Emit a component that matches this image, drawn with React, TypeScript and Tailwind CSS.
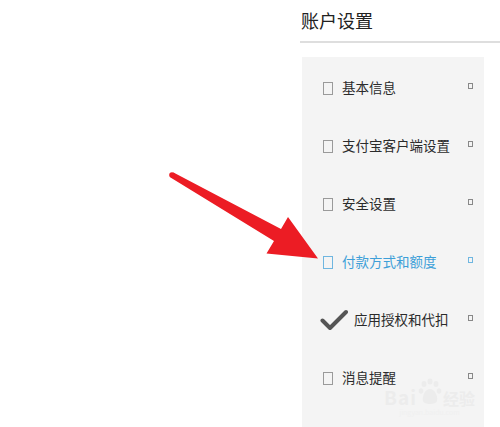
import { ReactNode } from "react"

type Item = {
	label: string
	active?: boolean
	checked?: boolean
}

const items: Item[] = [
	{ label: "基本信息" },
	{ label: "支付宝客户端设置" },
	{ label: "安全设置" },
	{ label: "付款方式和额度", active: true },
	{ label: "应用授权和代扣", checked: true },
	{ label: "消息提醒" },
]

const font = { fontFamily: '"Noto Sans CJK SC", "Noto Sans", sans-serif' }

function Check() {
	return (
		<svg width="28" height="22" viewBox="0 0 28 22" className="-ml-[3px] shrink-0">
			<path
				d="M2.5 11.5 L10 19 L26 3"
				fill="none"
				stroke="#555"
				strokeWidth="4"
				strokeLinecap="round"
				strokeLinejoin="round"
			/>
		</svg>
	)
}

function Row({ item }: { item: Item }) {
	let icon: ReactNode
	if (item.checked) {
		icon = <Check />
	} else {
		icon = (
			<div
				className={
					item.active
						? "w-[10px] h-[13px] border border-[#6fb6e0] shrink-0"
						: "w-[10px] h-[13px] border border-[#9a9a9a] shrink-0"
				}
			/>
		)
	}

	return (
		<div className="h-[58px] flex items-center pl-[21px] pr-[11px]">
			{icon}
			<span
				className={
					(item.checked ? "ml-[6px] " : "ml-[9px] ") +
					"flex-1 text-[13.5px] leading-none " +
					(item.active ? "text-[#3d9fd8]" : "text-[#2b2b2b]")
				}
			>
				{item.label}
			</span>
			<div
				className={
					item.active
						? "w-[5px] h-[6px] border border-[#6fb6e0] -translate-y-[2px]"
						: "w-[5px] h-[6px] border border-[#888] -translate-y-[2px]"
				}
			/>
		</div>
	)
}

function Arrow() {
	return (
		<svg className="absolute left-0 top-0 pointer-events-none" width="500" height="427">
			<polygon
				points="173.5,172.6 281,229 288,217 318,258.5 266.5,253.5 274,241 170.5,177.4"
				fill="#ec1c24"
			/>
			<circle cx="172" cy="175" r="2.8" fill="#ec1c24" />
		</svg>
	)
}

function Watermark() {
	return (
		<div className="absolute left-[384px] top-[378px] flex flex-col items-center pointer-events-none select-none">
			<div className="flex items-end" style={{ ...font }}>
				<span className="text-[19px] font-bold leading-none text-[#ececec] tracking-[1px]">Bai</span>
				<svg width="24" height="28" viewBox="0 0 24 28" className="mx-[1px]">
					<g fill="#ececec">
						<ellipse cx="6" cy="6" rx="2.5" ry="3" />
						<ellipse cx="12" cy="3.5" rx="2.5" ry="3" />
						<ellipse cx="18" cy="6" rx="2.5" ry="3" />
						<ellipse cx="3" cy="13" rx="2.3" ry="2.8" />
						<ellipse cx="21" cy="13" rx="2.3" ry="2.8" />
						<path d="M12 11 C7 11 4 18 5 23 C6 27 18 27 19 23 C20 18 17 11 12 11 Z" />
					</g>
				</svg>
				<span className="text-[16px] font-bold leading-none text-[#ececec]">经验</span>
			</div>
			<span className="text-[7px] leading-none mt-[3px] text-[#f0f0f0]" style={font}>
				jingyan.baidu.com
			</span>
		</div>
	)
}

export default function App() {
	return (
		<div className="relative w-[500px] h-[427px] bg-white flex overflow-hidden" style={font}>
			<div className="w-[300px] shrink-0" />
			<div className="flex-1 flex flex-col">
				<h1 className="pt-[9px] pl-[1px] text-[18px] leading-[22px] text-[#222] font-normal">
					账户设置
				</h1>
				<div className="mt-[10px] h-[2px] bg-[#dedede]" />
				<div className="mt-[14px] ml-[2px] w-[182px] flex-1 bg-[#f4f4f4] pt-[2px]">
					{items.map((item) => (
						<Row key={item.label} item={item} />
					))}
				</div>
			</div>
			<Watermark />
			<Arrow />
		</div>
	)
}
